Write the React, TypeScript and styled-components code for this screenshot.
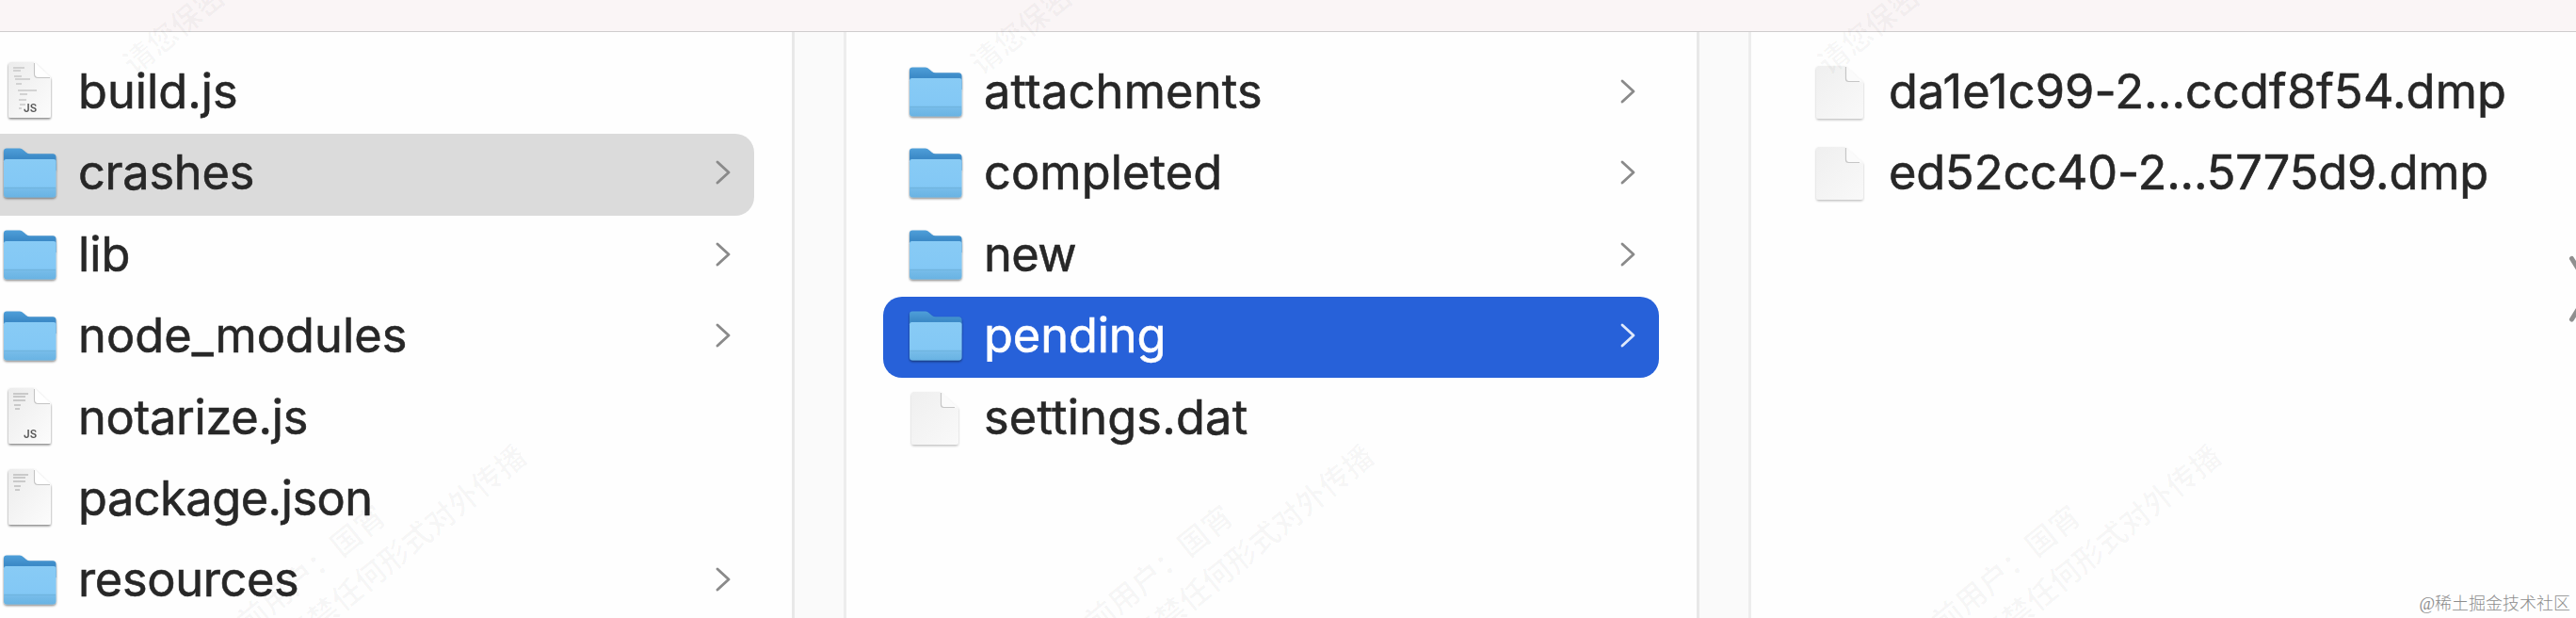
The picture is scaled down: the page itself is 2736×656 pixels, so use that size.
import React from 'react';
import styled, { createGlobalStyle } from 'styled-components';

type IconKind = 'folder' | 'script' | 'shortScript' | 'json' | 'blank';

interface FileItem {
  name: string;
  icon: IconKind;
  tracking: number;
  selected?: 'active' | 'inactive';
}

const colors = {
  toolbar: '#faf5f6',
  line: '#cfcccd',
  text: '#272727',
  active: '#2761d9',
  inactive: '#dbdbdb',
  track: '#fafafa',
  trackLine: '#e8e8e8',
};

const GlobalStyle = createGlobalStyle`
  * {
    box-sizing: border-box;
  }

  body {
    margin: 0;
    background-color: #fefefe;
  }
`;

const Window = styled.div`
  position: relative;
  display: flex;
  flex-direction: column;
  width: 2736px;
  height: 656px;
  overflow: hidden;
  background-color: #fefefe;
  font-family: Inter, 'Noto Sans CJK SC', sans-serif;
`;

const Toolbar = styled.div`
  flex: none;
  height: 34px;
  background-color: ${colors.toolbar};
  border-bottom: 1px solid ${colors.line};
`;

const Browser = styled.div`
  display: flex;
  flex: 1;
  min-height: 0;
`;

const Column = styled.div<{ $width: number; $left: number; $right: number }>`
  flex: none;
  width: ${props => props.$width}px;
  padding: 21.8px ${props => props.$right}px 0 ${props => props.$left}px;
`;

/* first column is scrolled sideways, its rows start left of the window */
const ScrolledColumn = styled(Column)`
  margin-left: -24px;
`;

const Track = styled.div`
  flex: none;
  width: 58px;
  background-color: ${colors.track};
  border-left: 3px solid ${colors.trackLine};
  border-right: 3px solid #ededed;
`;

const Row = styled.div<{ $selected?: 'active' | 'inactive' }>`
  display: flex;
  align-items: center;
  height: 86.4px;
  padding: 0 25px 0 24px;
  border-radius: 20px;
  background-color: ${props => (props.$selected ? colors[props.$selected] : 'transparent')};
  color: ${props => (props.$selected === 'active' ? '#fff' : colors.text)};
`;

const IconBox = styled.div`
  flex: none;
  width: 64px;
  height: 68px;

  svg {
    display: block;
    overflow: visible;
  }
`;

const Name = styled.span<{ $tracking: number }>`
  flex: 1;
  margin-left: 19px;
  padding-bottom: 4px;
  font-size: 50.5px;
  line-height: 60px;
  letter-spacing: ${props => props.$tracking}px;
  white-space: nowrap;
  -webkit-text-stroke: 0.6px currentColor;
`;

const ChevronIcon = styled.svg`
  flex: none;
  margin-bottom: 4px;
`;

const Watermark = styled.div<{ $x: number; $y: number }>`
  position: absolute;
  left: ${props => props.$x}px;
  top: ${props => props.$y}px;
  transform: rotate(-39.2deg);
  transform-origin: 0 50%;
  color: rgba(0, 0, 0, 0.028);
  font-family: 'Noto Sans CJK SC', sans-serif;
  font-size: 32px;
  font-weight: 700;
  line-height: 40px;
  white-space: nowrap;
  pointer-events: none;
`;

const Credit = styled.div`
  position: absolute;
  right: 6px;
  bottom: 2px;
  color: #8c8c8c;
  font-family: 'Liberation Serif', 'Noto Sans CJK SC', serif;
  font-size: 18px;
  font-weight: 300;
  line-height: 26px;
`;

const EdgeMark = styled.svg`
  position: absolute;
  top: 270px;
  right: 0;
`;

const firstColumn: FileItem[] = [
  { name: 'build.js', icon: 'script', tracking: 0 },
  { name: 'crashes', icon: 'folder', tracking: -0.25, selected: 'inactive' },
  { name: 'lib', icon: 'folder', tracking: 0 },
  { name: 'node_modules', icon: 'folder', tracking: 0.05 },
  { name: 'notarize.js', icon: 'shortScript', tracking: -0.3 },
  { name: 'package.json', icon: 'json', tracking: -0.5 },
  { name: 'resources', icon: 'folder', tracking: -0.35 },
];

const secondColumn: FileItem[] = [
  { name: 'attachments', icon: 'folder', tracking: 0.2 },
  { name: 'completed', icon: 'folder', tracking: 0.1 },
  { name: 'new', icon: 'folder', tracking: -0.6 },
  { name: 'pending', icon: 'folder', tracking: -0.1, selected: 'active' },
  { name: 'settings.dat', icon: 'blank', tracking: 0.2 },
];

const thirdColumn: FileItem[] = [
  { name: 'da1e1c99-2...ccdf8f54.dmp', icon: 'blank', tracking: 0.12 },
  { name: 'ed52cc40-2...5775d9.dmp', icon: 'blank', tracking: -0.12 },
];

const watermarkOffsets = [-900, 0, 900];

function Gradients() {
  return (
    <svg width="0" height="0" style={{ position: 'absolute' }}>
      <defs>
        <linearGradient id="folderBack" x1="0" y1="0" x2="0" y2="1">
          <stop offset="0" stopColor="#4f9fd9" />
          <stop offset="0.4" stopColor="#3d8bc8" />
          <stop offset="1" stopColor="#3c88c4" />
        </linearGradient>
        <linearGradient id="folderFront" x1="0" y1="0" x2="0" y2="1">
          <stop offset="0" stopColor="#88cbf5" />
          <stop offset="0.7" stopColor="#83c8f5" />
          <stop offset="0.77" stopColor="#76bce9" />
          <stop offset="1" stopColor="#69b3e3" />
        </linearGradient>
        <linearGradient id="paper" x1="0" y1="0" x2="1" y2="1">
          <stop offset="0" stopColor="#ececec" />
          <stop offset="1" stopColor="#fcfcfc" />
        </linearGradient>
        <linearGradient id="blankPaper" x1="0" y1="0" x2="1" y2="1">
          <stop offset="0" stopColor="#efefef" />
          <stop offset="1" stopColor="#f9f9f9" />
        </linearGradient>
        <filter id="iconShadow" x="-20%" y="-20%" width="140%" height="140%">
          <feDropShadow dx="0" dy="1.4" stdDeviation="1.2" floodOpacity="0.5" />
        </filter>
        <filter id="softShadow" x="-20%" y="-20%" width="140%" height="140%">
          <feDropShadow dx="0" dy="1.4" stdDeviation="0.9" floodOpacity="0.25" />
        </filter>
      </defs>
    </svg>
  );
}

function FolderIcon() {
  return (
    <svg width="64" height="68" viewBox="0 0 64 68" filter="url(#iconShadow)">
      <path
        d="M4 9.500q0-3 3-3h14q2 0 4 2l3 2.500q1.500 1.300 3.500 1.300h24.500q3.500 0 3.500 3.500V30H4z"
        fill="url(#folderBack)"
      />
      <path
        d="M4 20.500q0-2.500 2.500-2.500h50.500q2.500 0 2.500 2.500v34.500q0 3.500-3.500 3.500H7.500q-3.500 0-3.500-3.500z"
        fill="url(#folderFront)"
      />
      <path d="M4.500 48.500h54.500" stroke="#6fb2dd" strokeWidth="0.900" />
    </svg>
  );
}

function PaperIcon({ kind }: { kind: IconKind }) {
  const blank = kind === 'blank';
  return (
    <svg width="64" height="68" viewBox="0 0 64 68" filter={blank ? 'url(#softShadow)' : 'url(#iconShadow)'}>
      {blank ? (
        <>
          <path d="M6 8q0-3 3-3h27.500L56 22v36q0 3-3 3H9q-3 0-3-3z" fill="url(#blankPaper)" />
          <path d="M37.500 5.500v13q0 3 3 3H55z" fill="#fbfbfb" />
          <path d="M37.500 6v12.500q0 3 3 3H52" fill="none" stroke="#c6c6c6" strokeWidth="1.200" />
        </>
      ) : (
        <>
          <path d="M9 4q0-3 3-3h24l18 17v40q0 2-2 2H11q-2 0-2-2z" fill="url(#paper)" />
          <path d="M36.500 1v12.500q0 4 4 4H54z" fill="#fff" />
          <path d="M36.500 2v11.500q0 4 4 4H53" fill="none" stroke="#c4c4c4" strokeWidth="1.100" />
        </>
      )}
      {kind === 'script' && (
        <path
          d="M14 7h12M14 10h8M15 16h8M16 19h16M17 24h6M19 31h20M21 35h8M20 41h8M21 46h6M20 50h3"
          stroke="#c8c8c8"
          strokeWidth="1.600"
        />
      )}
      {(kind === 'shortScript' || kind === 'json') && (
        <path d="M14 7h16M14 10h13M14 14h13M15 19h7M16 23h5" stroke="#bdbdbd" strokeWidth="1.600" />
      )}
      {(kind === 'script' || kind === 'shortScript') && (
        <text x="25" y="53.500" fontFamily="Inter, sans-serif" fontSize="11.500" fontWeight="600" fill="#555">
          JS
        </text>
      )}
    </svg>
  );
}

function Chevron({ active }: { active: boolean }) {
  return (
    <ChevronIcon width="16" height="28" viewBox="0 0 16 28" fill="none">
      <path
        d="M2 3l12 11L2 25"
        stroke={active ? '#dfe9fb' : '#8a8a8a'}
        strokeWidth="2.800"
        strokeLinecap="round"
        strokeLinejoin="round"
      />
    </ChevronIcon>
  );
}

function FileRow({ item }: { item: FileItem }) {
  return (
    <Row $selected={item.selected}>
      <IconBox>{item.icon === 'folder' ? <FolderIcon /> : <PaperIcon kind={item.icon} />}</IconBox>
      <Name $tracking={item.tracking}>{item.name}</Name>
      {item.icon === 'folder' && <Chevron active={item.selected === 'active'} />}
    </Row>
  );
}

function App() {
  return (
    <Window>
      <GlobalStyle />
      <Gradients />
      <Toolbar />
      <Browser>
        <ScrolledColumn $width={865} $left={0} $right={40}>
          {firstColumn.map(item => (
            <FileRow key={item.name} item={item} />
          ))}
        </ScrolledColumn>
        <Track />
        <Column $width={903} $left={39} $right={40}>
          {secondColumn.map(item => (
            <FileRow key={item.name} item={item} />
          ))}
        </Column>
        <Track />
        <Column $width={876} $left={39} $right={0}>
          {thirdColumn.map(item => (
            <FileRow key={item.name} item={item} />
          ))}
        </Column>
      </Browser>
      {watermarkOffsets.map(offset => (
        <React.Fragment key={offset}>
          <Watermark $x={1034 + offset} $y={50}>请您保密</Watermark>
          <Watermark $x={1130 + offset} $y={663}>当前用户：国宵</Watermark>
          <Watermark $x={1205 + offset} $y={660}>严禁任何形式对外传播</Watermark>
        </React.Fragment>
      ))}
      <EdgeMark width="10" height="72" viewBox="0 0 10 72" fill="none">
        <path d="M5.500 4.500l8 13M5.500 69l8-13" stroke="#8f8f8f" strokeWidth="5" strokeLinecap="round" />
      </EdgeMark>
      <Credit>@稀土掘金技术社区</Credit>
    </Window>
  );
}

export default App;
